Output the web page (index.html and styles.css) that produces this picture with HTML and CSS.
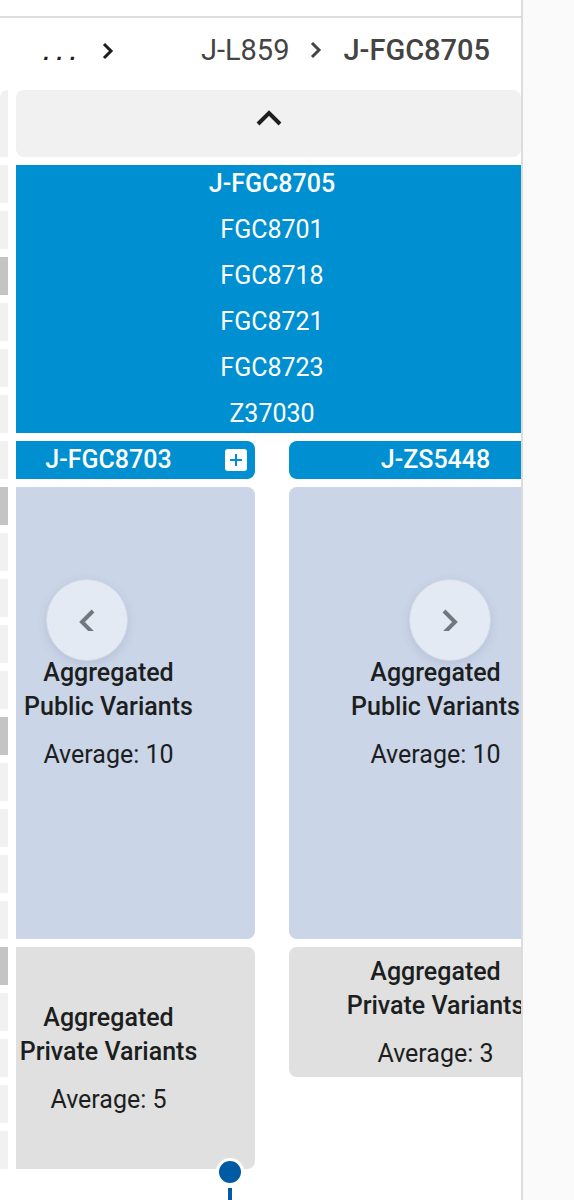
FILE: index.html
```html
<!DOCTYPE html>
<html lang="en">
<head>
    <meta charset="UTF-8">
    <meta name="viewport" content="width=device-width, initial-scale=1.0">
    <title>J-FGC8705</title>
    <link rel="stylesheet" href="styles.css">
</head>
<body>
    <main class="panel">
        <div class="topbar"></div>

        <nav class="crumbs" aria-label="Breadcrumb">
            <a href="#" class="crumb-more">...</a>
            <svg class="crumb-sep first" viewBox="0 0 12 18"><path d="M2 2l7 7-7 7"/></svg>
            <a href="#" class="crumb">J-L859</a>
            <svg class="crumb-sep" viewBox="0 0 12 18"><path d="M2 2l7 7-7 7"/></svg>
            <a href="#" class="crumb current">J-FGC8705</a>
        </nav>

        <div class="tree">
            <div class="scale">
                <div class="scale-head"></div>
                <div class="tick"></div>
                <div class="tick"></div>
                <div class="tick major"></div>
                <div class="tick"></div>
                <div class="tick"></div>
                <div class="tick"></div>
                <div class="tick"></div>
                <div class="tick major"></div>
                <div class="tick"></div>
                <div class="tick"></div>
                <div class="tick"></div>
                <div class="tick"></div>
                <div class="tick major"></div>
                <div class="tick"></div>
                <div class="tick"></div>
                <div class="tick"></div>
                <div class="tick"></div>
                <div class="tick major"></div>
                <div class="tick"></div>
                <div class="tick"></div>
                <div class="tick"></div>
                <div class="tick"></div>
            </div>

            <div class="view">
                <button type="button" class="btn-up" aria-label="Up one level">
                    <svg viewBox="0 0 26 16"><path d="M2 14L13 3l11 11"/></svg>
                </button>

                <div class="track">
                    <ul class="root">
                        <li class="name">J-FGC8705</li>
                        <li>FGC8701</li>
                        <li>FGC8718</li>
                        <li>FGC8721</li>
                        <li>FGC8723</li>
                        <li>Z37030</li>
                    </ul>

                    <div class="branches">
                        <section class="branch">
                            <div class="branch-name">
                                <span>J-FGC8703</span>
                                <button type="button" class="btn-expand" aria-label="Expand">
                                    <svg viewBox="0 0 22 22"><path d="M11 5v12M5 11h12"/></svg>
                                </button>
                            </div>
                            <div class="block public">
                                <h2>Aggregated<br>Public Variants</h2>
                                <p>Average: 10</p>
                            </div>
                            <div class="block private rows-5">
                                <h2>Aggregated<br>Private Variants</h2>
                                <p>Average: 5</p>
                                <span class="node"></span>
                            </div>
                        </section>

                        <section class="branch">
                            <div class="branch-name">
                                <span>J-ZS5448</span>
                            </div>
                            <div class="block public">
                                <h2>Aggregated<br>Public Variants</h2>
                                <p>Average: 10</p>
                            </div>
                            <div class="block private rows-3">
                                <h2>Aggregated<br>Private Variants</h2>
                                <p>Average: 3</p>
                            </div>
                        </section>
                    </div>
                </div>

                <button type="button" class="btn-nav prev" aria-label="Previous">
                    <svg viewBox="0 0 18 22"><path d="M15 2L4 13l11 11"/></svg>
                </button>
                <button type="button" class="btn-nav next" aria-label="Next">
                    <svg viewBox="0 0 18 22"><path d="M3 2l11 11L3 24"/></svg>
                </button>
            </div>
        </div>
    </main>
</body>
</html>
```

FILE: styles.css
```css
* {
    margin: 0;
    padding: 0;
    box-sizing: border-box;
}

body {
    font-family: Roboto, "Liberation Sans", sans-serif;
    font-size: 25px;
    color: #1c1e20;
    background: #fafafa;
    height: 100vh;
    padding-right: 51px;
    overflow: hidden;
}

a {
    color: inherit;
    text-decoration: none;
}

button {
    border: none;
    cursor: pointer;
}

svg {
    display: block;
    fill: none;
    stroke: currentColor;
}

.panel {
    height: 100%;
    background: #fff;
    border-right: 2px solid #dcdcdc;
    overflow: hidden;
}

.topbar {
    height: 18px;
    border-bottom: 2px solid #dcdcdc;
}

/* breadcrumb */
.crumbs {
    display: flex;
    align-items: center;
    height: 72px;
    padding: 0 31px 8px 40px;
    font-size: 29px;
    color: #444;
}

.crumb-more {
    font: italic bold 22px "Liberation Mono", monospace;
    color: #1c1e20;
    padding-top: 8px;
}

.crumb-sep {
    width: 12px;
    height: 18px;
    margin: 0 21px;
    stroke-width: 3;
}

.crumb-sep.first {
    color: #1c1e20;
    margin: 2px auto 0 22px;
}

.current {
    font-weight: 500;
}

/* tree */
.tree {
    display: grid;
    grid-template-columns: 8px 1fr;
    gap: 8px;
}

.scale {
    display: flex;
    flex-direction: column;
    gap: 8px;
}

.scale-head {
    height: 67px;
    background: #f1f1f1;
    border-top-left-radius: 8px;
}

.tick {
    height: 38px;
    background: #f1f1f1;
}

.tick.major {
    background: #c4c4c4;
}

.view {
    position: relative;
    min-width: 0;
    overflow: hidden;
}

.btn-up {
    display: flex;
    justify-content: center;
    width: 100%;
    height: 67px;
    padding-top: 20px;
    margin-bottom: 8px;
    background: #f1f1f1;
    border-radius: 8px;
    color: #1c1e20;
}

.btn-up svg {
    width: 26px;
    height: 16px;
    stroke-width: 4;
}

/* the track is wider than the view and scrolled a little to the left */
.track {
    width: 620px;
    margin-left: -54px;
    padding-bottom: 48px;
}

.root {
    display: flex;
    flex-direction: column;
    gap: 8px;
    margin-bottom: 8px;
    list-style: none;
    text-align: center;
    line-height: 38px;
    color: #fff;
    background: #008fd0;
}

.root .name {
    font-weight: 500;
}

.branches {
    display: grid;
    grid-template-columns: 1fr 1fr;
    gap: 34px;
    align-items: start;
}

.branch {
    display: flex;
    flex-direction: column;
    gap: 8px;
}

.branch-name {
    position: relative;
    height: 38px;
    line-height: 38px;
    border-radius: 8px;
    background: #008fd0;
    color: #fff;
    font-weight: 500;
    text-align: center;
}

.btn-expand {
    position: absolute;
    top: 8px;
    right: 8px;
    width: 22px;
    height: 22px;
    border-radius: 3px;
    background: #fff;
    color: #008fd0;
}

.btn-expand svg {
    stroke-width: 2;
}

.block {
    position: relative;
    display: flex;
    flex-direction: column;
    justify-content: center;
    gap: 14px;
    padding-top: 2px;
    border-radius: 8px;
    text-align: center;
    line-height: 34px;
}

.block h2 {
    font-size: 25px;
    font-weight: 500;
}

.public {
    height: 452px;
    background: #cbd5e8;
}

.private {
    background: #e0e0e0;
}

.rows-5 {
    height: 222px;
}

.rows-3 {
    height: 130px;
}

/* marker with the line going down from it */
.node {
    position: absolute;
    right: 11px;
    bottom: -17px;
    width: 28px;
    height: 28px;
    border: 3px solid #fff;
    border-radius: 50%;
    background: #005ba4;
}

.node::after {
    content: "";
    position: absolute;
    top: 27px;
    left: 9px;
    width: 4px;
    height: 24px;
    background: #005ba4;
}

/* previous / next */
.btn-nav {
    position: absolute;
    top: 489px;
    display: flex;
    align-items: center;
    justify-content: center;
    width: 82px;
    height: 82px;
    border: 1px solid #d5dbe5;
    border-radius: 50%;
    background: #e4eaf4;
    color: #72767d;
    box-shadow: 0 3px 10px rgba(60, 80, 120, 0.15);
}

.btn-nav svg {
    width: 18px;
    height: 22px;
    stroke-width: 4;
}

.prev {
    left: 30px;
}

.next {
    right: 30px;
}
```
